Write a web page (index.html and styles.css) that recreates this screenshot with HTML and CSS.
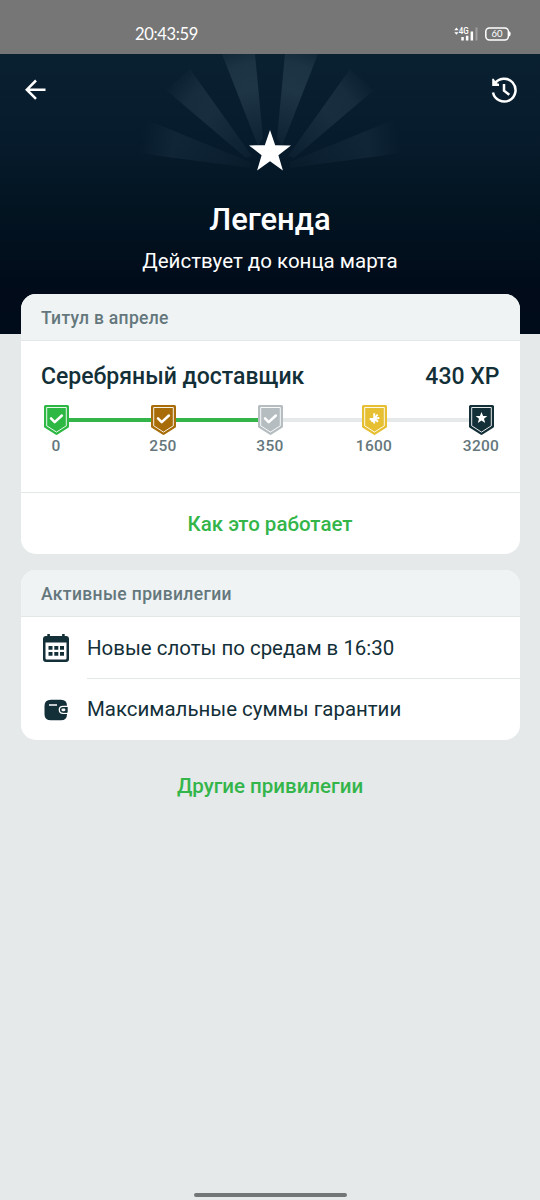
FILE: index.html
```html
<!DOCTYPE html>
<html lang="ru">
<head>
<meta charset="utf-8">
<meta name="viewport" content="width=device-width">
<title>Легенда</title>
<link rel="stylesheet" href="styles.css">
</head>
<body>
<svg class="defs" width="0" height="0" aria-hidden="true">
  <symbol id="shield" viewBox="0 0 25 30">
    <path fill="currentColor" d="M1.5 0h22Q25 0 25 1.500V21.500Q25 22.300 24.200 22.800L13.500 29.600Q12.500 30.200 11.500 29.600L.8 22.800Q0 22.300 0 21.500V1.500Q0 0 1.500 0z"/>
    <path fill="none" stroke="#fff" stroke-opacity=".9" stroke-width="1" d="M2.700 2.500h19.600v18.300l-9.800 6.300-9.800-6.300z"/>
  </symbol>
  <symbol id="check" viewBox="0 0 25 30">
    <path fill="none" stroke="#fff" stroke-width="2.500" stroke-linecap="round" stroke-linejoin="round" d="M7 13.400l3.700 3.800 7.200-6.700"/>
  </symbol>
</svg>
<div class="screen">
  <header class="status">
    <span class="time">20:43:59</span>
    <div class="indicators">
      <svg width="26" height="16" viewBox="0 0 26 16">
        <path fill="#fff" d="M.3 4.200L2.400 1.600 4.500 4.200zM.3 6.200h4.200L2.400 8.800z"/>
        <text class="net" x="4.800" y="8" textLength="10" lengthAdjust="spacingAndGlyphs">4G</text>
        <path fill="#fff" d="M7.300 11h2.500v3.500H7.300zM11.900 9.700h2.500v4.800h-2.500zM16.600 5.500h2.500v9h-2.500z"/>
        <path fill="#fff" opacity=".3" d="M21.500 1.500h2v13h-2z"/>
      </svg>
      <svg width="26" height="16" viewBox="0 0 26 16">
        <rect x=".8" y="1.900" width="22.600" height="12" rx="3.600" fill="none" stroke="#fff" stroke-width="1.500"/>
        <path fill="#fff" d="M24 5.300q1.700.4 1.700 2.600T24 10.500z"/>
        <text class="charge" x="12" y="11.200" text-anchor="middle">60</text>
      </svg>
    </div>
  </header>

  <section class="hero">
    <svg class="rays" width="270" height="120" viewBox="135 54 270 120" aria-hidden="true">
      <defs>
        <radialGradient id="glow" gradientUnits="userSpaceOnUse" cx="270" cy="165" r="130">
          <stop offset=".12" stop-color="#385062" stop-opacity=".1"/>
          <stop offset=".6" stop-color="#385062" stop-opacity=".46"/>
          <stop offset=".8" stop-color="#385062" stop-opacity=".4"/>
          <stop offset="1" stop-color="#385062" stop-opacity="0"/>
        </radialGradient>
        <radialGradient id="glow-low" gradientUnits="userSpaceOnUse" cx="270" cy="165" r="132">
          <stop offset=".12" stop-color="#385062" stop-opacity=".05"/>
          <stop offset=".75" stop-color="#385062" stop-opacity=".2"/>
          <stop offset="1" stop-color="#385062" stop-opacity="0"/>
        </radialGradient>
        <g id="fan">
          <path fill="url(#glow)" d="M222 54H255l8 84-5 8z"/>
          <path fill="url(#glow)" opacity=".75" d="M190 69l62 87-6 2-80-68z"/>
          <path fill="url(#glow-low)" d="M140 119l12 3 98 40v6l-97-13-15-2z"/>
        </g>
      </defs>
      <use href="#fan"/>
      <use href="#fan" transform="translate(540 0) scale(-1 1)"/>
    </svg>
    <nav class="toolbar">
      <svg width="24" height="24" viewBox="0 0 24 24"><path fill="none" stroke="#fff" stroke-width="2.500" d="M22.500 11.700H3.800M13 2.500L3.800 11.700 13 20.900"/></svg>
      <svg width="28" height="28" viewBox="0 0 28 28">
        <path fill="none" stroke="#fff" stroke-width="2.500" d="M4.600 7.900A11.400 11.400 0 1 1 3 16.600M14 8v6.700l5.300 4"/>
        <path fill="#fff" d="M2.200 2.800h1.600l1.400 2.400 1.800 2 2 .6v2.100H2.200z"/>
      </svg>
    </nav>
    <svg class="star" width="42" height="41" viewBox="0 0 42 41"><path fill="#fff" d="M21 0l5.200 15.200 15.800.2-12.600 9.800 4.500 15.300L21 31.300 8.100 40.500l4.500-15.300L0 15.400l15.800-.2z"/></svg>
    <h1 class="title">Легенда</h1>
    <p class="subtitle">Действует до конца марта</p>
  </section>

  <main class="content">
    <section class="card">
      <h2 class="card-head month">Титул в апреле</h2>
      <div class="progress">
        <div class="rank"><span>Серебряный доставщик</span><span class="xp">430 XP</span></div>
        <div class="track">
          <div class="step green"><svg width="25" height="30"><use href="#shield"/><use href="#check"/></svg><span>0</span></div>
          <i class="line done"></i>
          <div class="step bronze"><svg width="25" height="30"><use href="#shield"/><use href="#check"/></svg><span>250</span></div>
          <i class="line done"></i>
          <div class="step silver"><svg width="25" height="30"><use href="#shield"/><use href="#check"/></svg><span>350</span></div>
          <i class="line"></i>
          <div class="step gold"><svg width="25" height="30"><use href="#shield"/><path fill="none" stroke="#fff" stroke-width="1.900" d="M12.200 8.200v10.300M7.600 14.200l9.800-1.200M12.200 13.300l3.500-3.600M12.200 13.600l3.800 3.200M12.200 13.600l-2.800 3"/></svg><span>1600</span></div>
          <i class="line"></i>
          <div class="step dark"><svg width="25" height="30"><use href="#shield"/><path fill="#fff" d="M12.500 7l1.600 4h4.200L15 13.700l1.200 4.300-3.700-2.500L8.800 18l1.200-4.300L6.700 11h4.200z"/></svg><span>3200</span></div>
        </div>
      </div>
      <a class="how">Как это работает</a>
    </section>

    <section class="card perks">
      <h2 class="card-head">Активные привилегии</h2>
      <div class="perk">
        <svg width="26" height="28" viewBox="0 0 26 28">
          <path fill="#132f38" fill-rule="evenodd" d="M4.300 0h2.600v2h12.200V0h2.600v2H23q3 0 3 3v20q0 3-3 3H3q-3 0-3-3V5q0-3 3-3h1.300zM2.500 8.500v15.700q0 1.300 1.300 1.300h18.400q1.300 0 1.300-1.300V8.500z"/>
          <path fill="#132f38" d="M5.500 12h4v3.700h-4zM11.300 12h4v3.700h-4zM17 12h4v3.700h-4zM5.500 18h4v3.800h-4zM11.300 18h4v3.800h-4zM17 18h4v3.800h-4z"/>
        </svg>
        <span class="perk-text">Новые слоты по средам в 16:30</span>
      </div>
      <div class="perk">
        <svg width="26" height="22" viewBox="0 0 26 22">
          <path fill="#132f38" d="M8 .7h10q6 0 6 6v8.600q0 6-6 6H8q-6.500 0-6.500-6V6.700q0-6 6.500-6z"/>
          <path fill="none" stroke="#fff" stroke-width="1.300" d="M6 6h8"/>
          <path fill="none" stroke="#fff" stroke-width="1.300" d="M25 7.300h-5q-3.700 0-3.700 3.500t3.700 3.500h5"/>
          <path fill="#132f38" d="M20 8h4.700v5.600H20z"/>
          <rect x="18.400" y="9.400" width="4" height="2.800" rx="1.400" fill="#fff"/>
        </svg>
        <span class="perk-text">Максимальные суммы гарантии</span>
      </div>
    </section>
    <a class="more">Другие привилегии</a>
  </main>
  <footer class="home"><i></i></footer>
</div>
</body>
</html>
```
FILE: styles.css
```css
* { box-sizing: border-box; }
body { margin: 0; font-family: Roboto, sans-serif; color: #132f38; }
h1, h2, p { margin: 0; font-weight: 500; }
svg { display: block; flex: none; }
.defs { position: absolute; }
.screen { height: 1200px; display: flex; flex-direction: column; background: #e5e9ea; overflow: hidden; }

.status { height: 54px; flex: none; display: flex; align-items: flex-start; justify-content: space-between; padding: 24px 29px 0 135px; background: #767676; color: #fff; }
.time { font: 400 16.5px/21px Lato, sans-serif; letter-spacing: -.35px; white-space: nowrap; }
.indicators { display: flex; gap: 5px; padding-top: 2px; }
.net { font: 500 9px Roboto, sans-serif; fill: #fff; }
.charge { font: 400 9.500px Lato, sans-serif; fill: #fff; }

.hero { position: relative; flex: none; height: 280px; display: flex; flex-direction: column; align-items: center; color: #fff; background: linear-gradient(#0a2131, #061a2b 35%, #031522 52%, #010b1a 85%, #010c1a); }
.rays { position: absolute; top: 0; left: 135px; }
.toolbar { width: 100%; height: 76px; display: flex; justify-content: space-between; align-items: flex-start; padding: 22px 22px 0 23px; }
.toolbar svg:first-child { margin-top: 2px; }
.star { position: relative; }
.title { margin-top: 29px; font-size: 31px; line-height: 40px; }
.subtitle { margin-top: 8px; font-size: 20.500px; line-height: 26px; font-weight: 400; white-space: nowrap; }

.content { position: relative; margin-top: -40px; padding: 0 20.500px; display: flex; flex-direction: column; }
.card { border-radius: 15px; overflow: hidden; background: #fff; height: 260px; display: flex; flex-direction: column; }
.card-head { flex: none; height: 47px; padding: 0 20.500px; background: #eff3f4; border-bottom: 1.500px solid #e3e7e8; color: #64777c; font-size: 17.500px; line-height: 48px; letter-spacing: .36px; }
.month { letter-spacing: .3px; }
.progress { flex: 1; padding: 21px 20px 0 20.500px; }
.rank { display: flex; justify-content: space-between; font-size: 23px; line-height: 30px; font-weight: 500; white-space: nowrap; }
.track { display: grid; grid-template-columns: 30px 77px 30px 77px 30px 74px 30px 77px 30px; margin-top: 13px; }
.step { position: relative; display: flex; flex-direction: column; align-items: center; }
.step span { margin-top: 1px; font-size: 15.500px; line-height: 20px; font-weight: 500; letter-spacing: .3px; color: #65777c; }
.green { color: #2db844; }
.bronze { color: #a86d08; }
.silver { color: #b5bdc1; }
.gold { color: #e6bf32; }
.dark { color: #132f38; }
.line { height: 4px; margin: 13px -4px 0; background: #e5e9ea; }
.line.done { background: #33b54a; }
.how, .more { color: #33b54a; font-size: 20.500px; font-weight: 500; text-align: center; }
.how { height: 62px; flex: none; border-top: 1.500px solid #e3e7e8; line-height: 63px; }

.perks { height: 170px; margin-top: 16px; }
.perk { display: flex; height: 61px; align-items: center; padding-left: 22.500px; gap: 18px; font-size: 20.450px; white-space: nowrap; }
.perk-text { flex: 1; height: 100%; line-height: 61px; }
.perk:nth-child(2) { height: 62px; }
.perk:nth-child(2) .perk-text { border-bottom: 1.500px solid #e3e7e8; line-height: 62px; }
.more { margin-top: 29.500px; line-height: 32px; }
.home { margin-top: auto; display: flex; justify-content: center; padding-bottom: 3px; }
.home i { width: 153px; height: 4px; border-radius: 2px; background: #727677; }
```
